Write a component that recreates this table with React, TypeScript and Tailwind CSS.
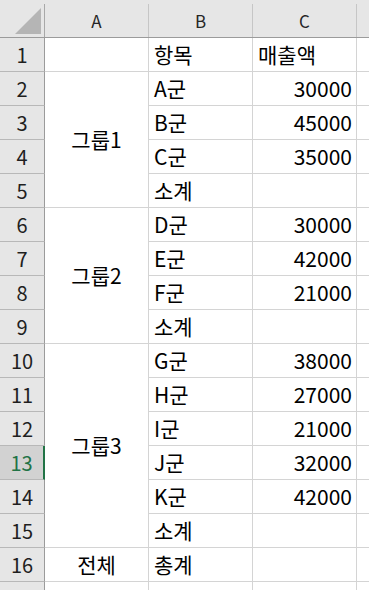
import React from 'react';

type Row = { n: number; b?: string; c?: string; cText?: boolean; hideNum?: boolean };

const ROWS: Row[] = [
  { n: 1, b: '항목', c: '매출액', cText: true },
  { n: 2, b: 'A군', c: '30000' },
  { n: 3, b: 'B군', c: '45000' },
  { n: 4, b: 'C군', c: '35000' },
  { n: 5, b: '소계' },
  { n: 6, b: 'D군', c: '30000' },
  { n: 7, b: 'E군', c: '42000' },
  { n: 8, b: 'F군', c: '21000' },
  { n: 9, b: '소계' },
  { n: 10, b: 'G군', c: '38000' },
  { n: 11, b: 'H군', c: '27000' },
  { n: 12, b: 'I군', c: '21000' },
  { n: 13, b: 'J군', c: '32000' },
  { n: 14, b: 'K군', c: '42000' },
  { n: 15, b: '소계' },
  { n: 16, b: '총계' },
  { n: 17, hideNum: true },
];

// merged cells in column A, keyed by the first row
const MERGED: Record<number, { label: string; span: string }> = {
  2: { label: '그룹1', span: 'row-span-4' },
  6: { label: '그룹2', span: 'row-span-4' },
  10: { label: '그룹3', span: 'row-span-6' },
};
const COVERED = [3, 4, 5, 7, 8, 9, 11, 12, 13, 14, 15];

const SELECTED_ROW = 13;

const App = () => {
  return (
    <div className="w-[369px] h-[590px] overflow-hidden bg-white text-black font-['Noto_Sans_CJK_KR','Noto_Sans',sans-serif]">
      {/* column headers */}
      <div className="h-[38px] pt-[4px] bg-[#e6e6e6] border-b border-[#9b9b9b] flex">
        <div className="w-[45px] h-[33px] border-r border-[#a8a8a8] relative shrink-0">
          <svg width="44" height="33" className="absolute left-0 top-0">
            <polygon points="15,30 41,30 41,4" fill="#b5b5b5" />
          </svg>
        </div>
        {['A', 'B', 'C'].map(col => (
          <div key={col} className="w-[104px] h-[33px] shrink-0 border-r border-[#c6c6c6] flex items-center justify-center text-[17px] leading-none text-[#262626]">
            {col}
          </div>
        ))}
        <div className="flex-1" />
      </div>

      {/* body */}
      <div className="grid grid-cols-[45px_104px_104px_104px_1fr] auto-rows-[34px]">
        {ROWS.map(row => {
          const selected = row.n === SELECTED_ROW;
          const merged = MERGED[row.n];
          return (
            <React.Fragment key={row.n}>
              <div
                className={`flex items-center justify-center text-[20px] leading-none border-b border-[#b8b8b8] ${
                  selected
                    ? 'bg-[#d2d2d2] text-[#217346] border-r-2 border-r-[#217346]'
                    : 'bg-[#e6e6e6] text-[#1f1f1f] border-r border-r-[#9b9b9b]'
                }`}
              >
                {row.hideNum ? '' : row.n}
              </div>
              {merged ? (
                <div className={`${merged.span} border-r border-b border-[#d4d4d4] flex items-center justify-center text-[21px] leading-none`}>
                  {merged.label}
                </div>
              ) : COVERED.includes(row.n) ? null : (
                <div className="border-r border-b border-[#d4d4d4] flex items-center justify-center text-[21px] leading-none">
                  {row.n === 16 ? '전체' : ''}
                </div>
              )}
              <div className="border-r border-b border-[#d4d4d4] flex items-center pl-[5px] text-[21px] leading-none">
                {row.b}
              </div>
              <div
                className={`border-r border-b border-[#d4d4d4] flex items-center text-[21px] leading-none ${
                  row.cText ? 'pl-[5px]' : 'justify-end pr-[4px]'
                }`}
              >
                {row.c}
              </div>
              <div className="border-b border-[#d4d4d4]" />
            </React.Fragment>
          );
        })}
      </div>
    </div>
  );
};

export default App;
